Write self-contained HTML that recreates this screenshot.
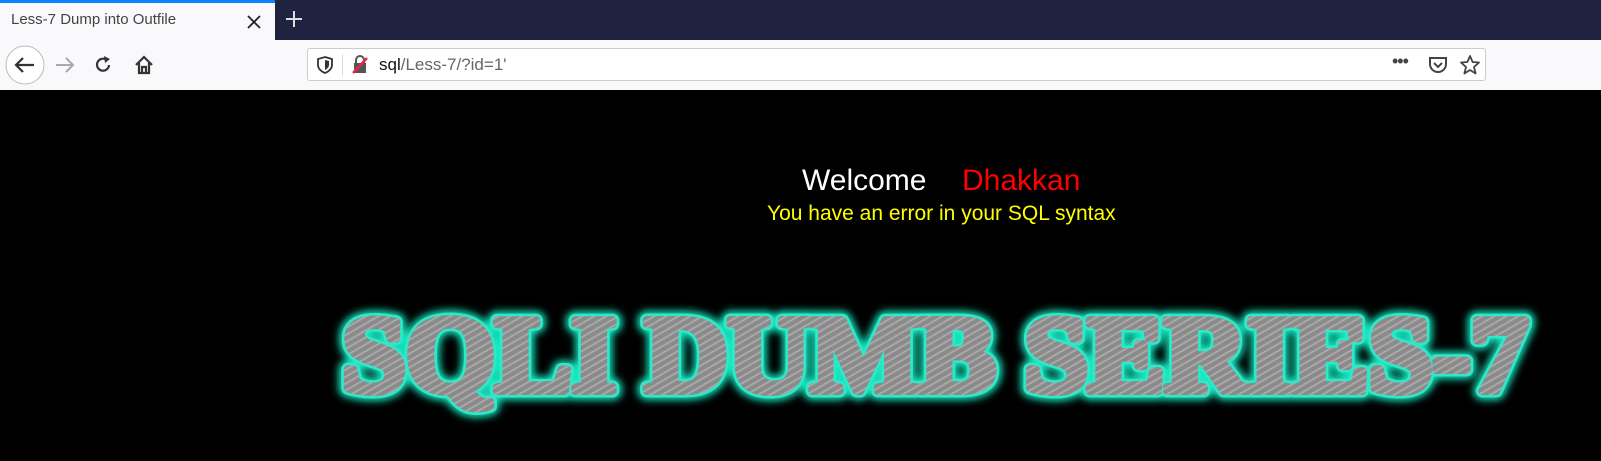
<!DOCTYPE html>
<html><head><style>
body{margin:0;width:1601px;height:461px;overflow:hidden;background:#000;font-family:"Liberation Sans",sans-serif;position:relative}
.tabbar{position:absolute;left:0;top:0;width:1601px;height:40px;background:#1f2340}
.tab{position:absolute;left:0;top:0;width:275px;height:40px;background:#f9f9fb;border-top:3px solid #0a84ff;box-sizing:border-box}
.tab span{position:absolute;left:11px;top:8px;font-size:15px;color:#444}
.nav{position:absolute;left:0;top:40px;width:1601px;height:50px;background:#f9f9fb}
.url{position:absolute;left:307px;top:8px;width:1179px;height:33px;background:#fff;border:1px solid #ccc;border-radius:3px;box-sizing:border-box}
.t{position:absolute;white-space:nowrap}
</style></head><body>
<div class="tabbar"><div class="tab"><span>Less-7 Dump into Outfile</span>
<svg style="position:absolute;left:247px;top:12px" width="14" height="14"><path d="M1 1L13 13M13 1L1 13" stroke="#222" stroke-width="1.8"/></svg></div>
<svg style="position:absolute;left:285px;top:10px" width="18" height="18"><path d="M9 1V17M1 9H17" stroke="#ddd" stroke-width="2"/></svg></div>
<div class="nav">
<svg style="position:absolute;left:4px;top:4px" width="42" height="42"><circle cx="21" cy="21" r="19" fill="#fff" stroke="#bbb"/><path d="M30 21H12M19 14L12 21L19 28" stroke="#333" stroke-width="2.2" fill="none"/></svg>
<svg style="position:absolute;left:54px;top:15px" width="22" height="20"><path d="M2 10H19M12 3L19 10L12 17" stroke="#aaa" stroke-width="2" fill="none"/></svg>
<svg style="position:absolute;left:94px;top:15px" width="20" height="20"><path d="M15 10A6 6 0 1 1 12 4.5" stroke="#333" stroke-width="2.2" fill="none"/><path d="M10 1L16 4L11 8Z" fill="#333"/></svg>
<svg style="position:absolute;left:133px;top:14px" width="22" height="22"><path d="M3 11L11 3L19 11M6 9V19H16V9M9 19V13H13V19" stroke="#333" stroke-width="2.2" fill="none"/></svg>
<div class="url">
<svg style="position:absolute;left:9px;top:7px" width="16" height="18"><path d="M8 1L15 3V9C15 13 11 16 8 17C5 16 1 13 1 9V3Z" stroke="#333" stroke-width="1.8" fill="none"/><path d="M8 4L12 5V9C12 11 10 13 8 14Z" fill="#333"/></svg>
<div style="position:absolute;left:34px;top:5px;width:1px;height:22px;background:#ddd"></div>
<svg style="position:absolute;left:43px;top:6px" width="18" height="20"><rect x="3" y="8" width="12" height="10" fill="#555"/><path d="M5 8V5A4 4 0 0 1 13 5V8" stroke="#555" stroke-width="2" fill="none"/><path d="M2 18L16 3" stroke="#e22850" stroke-width="2.5"/></svg>
<span class="t" style="left:71px;top:6px;font-size:17px;color:#111">sql<span style="color:#666">/Less-7/?id=1'</span></span>
<span class="t" style="left:1084px;top:2px;font-size:18px;color:#444;letter-spacing:-1px">•••</span>
<svg style="position:absolute;left:1120px;top:6px" width="20" height="20"><path d="M2 3H18V9A8 8 0 0 1 2 9Z" stroke="#444" stroke-width="2" fill="none"/><path d="M6 8L10 12L14 8" stroke="#444" stroke-width="2" fill="none"/></svg>
<svg style="position:absolute;left:1151px;top:5px" width="22" height="22"><path d="M11 2L13.6 8L20 8.5L15 13L16.6 19.5L11 16L5.4 19.5L7 13L2 8.5L8.4 8Z" stroke="#444" stroke-width="1.8" fill="none" stroke-linejoin="round"/></svg>
</div></div>
<span class="t" style="left:802px;top:164px;font-size:30px;color:#fff">Welcome</span>
<span class="t" style="left:962px;top:164px;font-size:30px;color:#f00">Dhakkan</span>
<span class="t" style="left:767px;top:202px;font-size:21px;color:#ff0">You have an error in your SQL syntax</span>
<svg style="position:absolute;left:0;top:0" width="1601" height="461">
<defs><filter id="g" x="-10%" y="-30%" width="120%" height="160%"><feGaussianBlur stdDeviation="4"/></filter>
<pattern id="p" width="6" height="6" patternUnits="userSpaceOnUse" patternTransform="rotate(60)"><rect width="6" height="6" fill="#8a8a8a"/><rect width="2" height="6" fill="#a8a8a8"/></pattern></defs>
<g font-family="Liberation Serif" font-weight="bold" font-size="108" stroke-linejoin="round">
<text x="342" y="391" textLength="1186" lengthAdjust="spacingAndGlyphs" fill="none" stroke="#19e8c0" stroke-width="18" filter="url(#g)">SQLI DUMB SERIES-7</text>
<text x="342" y="391" textLength="1186" lengthAdjust="spacingAndGlyphs" fill="none" stroke="#2ee8c8" stroke-width="13">SQLI DUMB SERIES-7</text>
<text x="342" y="391" textLength="1186" lengthAdjust="spacingAndGlyphs" fill="url(#p)" stroke="url(#p)" stroke-width="8">SQLI DUMB SERIES-7</text>
</g>
</svg>
</body></html>
